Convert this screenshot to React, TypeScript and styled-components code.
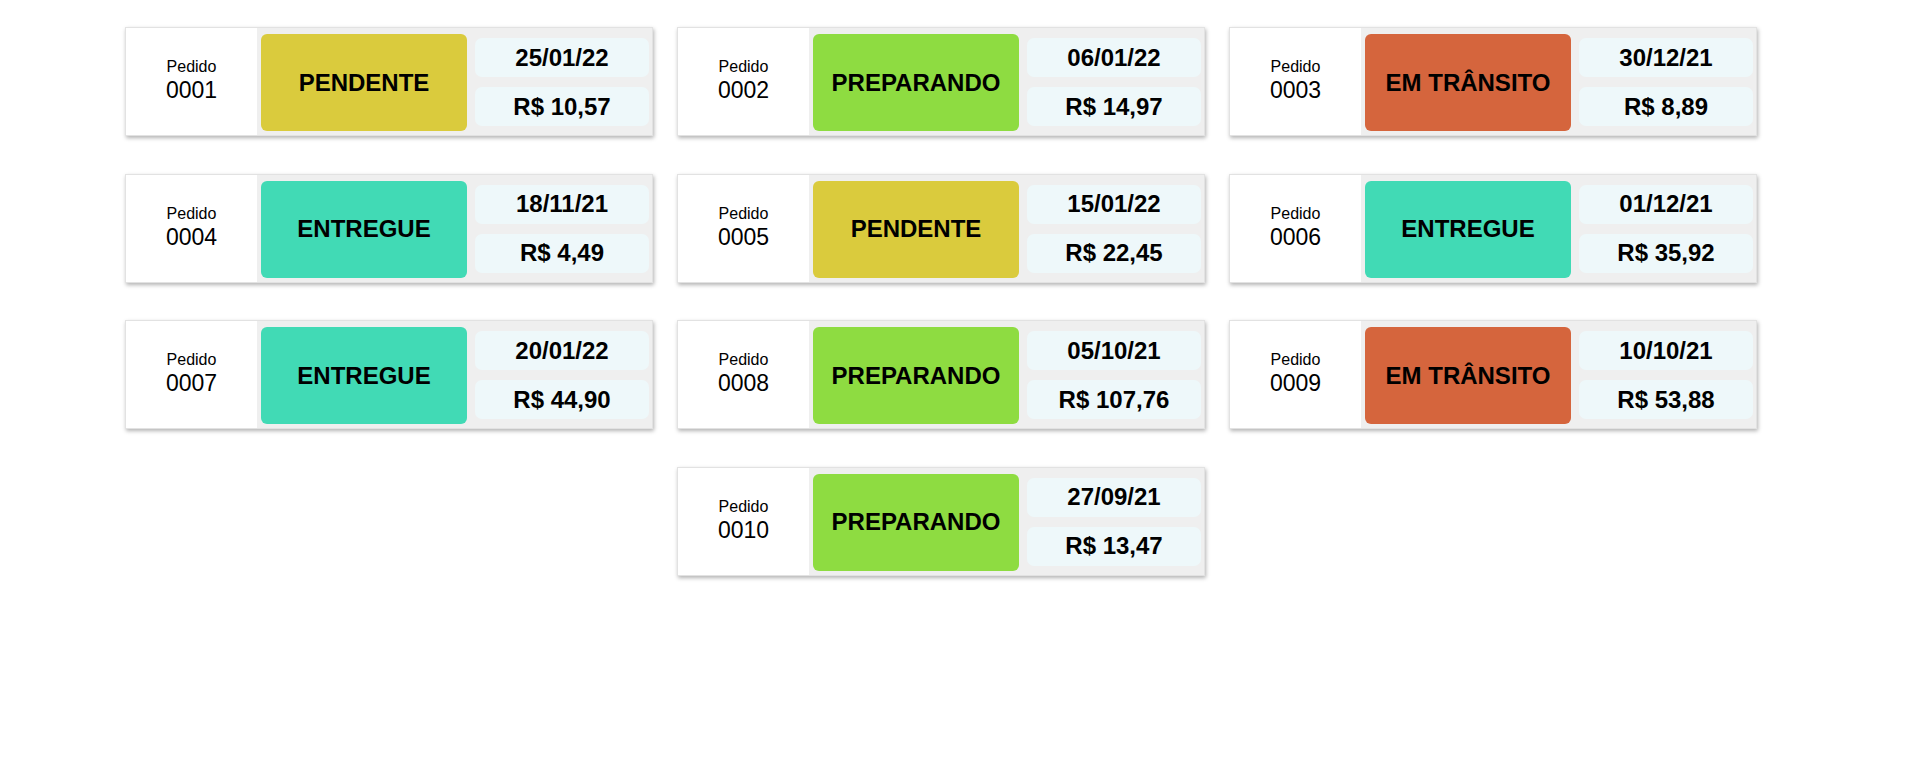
import styled, { createGlobalStyle } from "styled-components";

type Status = "PENDENTE" | "PREPARANDO" | "EM TRÂNSITO" | "ENTREGUE";

type Order = {
  id: string;
  status: Status;
  date: string;
  price: string;
};

const STATUS_COLORS: Record<Status, string> = {
  PENDENTE: "#dacb3d",
  PREPARANDO: "#8edc41",
  "EM TRÂNSITO": "#d5653d",
  ENTREGUE: "#41dab5",
};

const ORDERS: Order[] = [
  { id: "0001", status: "PENDENTE", date: "25/01/22", price: "R$ 10,57" },
  { id: "0002", status: "PREPARANDO", date: "06/01/22", price: "R$ 14,97" },
  { id: "0003", status: "EM TRÂNSITO", date: "30/12/21", price: "R$ 8,89" },
  { id: "0004", status: "ENTREGUE", date: "18/11/21", price: "R$ 4,49" },
  { id: "0005", status: "PENDENTE", date: "15/01/22", price: "R$ 22,45" },
  { id: "0006", status: "ENTREGUE", date: "01/12/21", price: "R$ 35,92" },
  { id: "0007", status: "ENTREGUE", date: "20/01/22", price: "R$ 44,90" },
  { id: "0008", status: "PREPARANDO", date: "05/10/21", price: "R$ 107,76" },
  { id: "0009", status: "EM TRÂNSITO", date: "10/10/21", price: "R$ 53,88" },
  { id: "0010", status: "PREPARANDO", date: "27/09/21", price: "R$ 13,47" },
];

const GlobalStyle = createGlobalStyle`
  body {
    margin: 0;
    background: #ffffff;
    font-family: "Liberation Sans", Arial, sans-serif;
    color: #000000;
  }
`;

const OrderCard = ({ order }: { order: Order }) => (
  <Card>
    <IdColumn>
      <IdLabel>Pedido</IdLabel>
      <IdNumber>{order.id}</IdNumber>
    </IdColumn>
    <StatusBox $color={STATUS_COLORS[order.status]}>{order.status}</StatusBox>
    <InfoColumn>
      <InfoBox>{order.date}</InfoBox>
      <InfoBox>{order.price}</InfoBox>
    </InfoColumn>
  </Card>
);

export default function App() {
  return (
    <>
      <GlobalStyle />
      <Page>
        <OrderList>
          {ORDERS.map((order) => (
            <OrderCard key={order.id} order={order} />
          ))}
        </OrderList>
      </Page>
    </>
  );
}

const Page = styled.main`
  padding: 27px 0 40px 125px;
`;

const OrderList = styled.div`
  width: 1632px;
  display: flex;
  flex-wrap: wrap;
  justify-content: center;
  column-gap: 24px;
  row-gap: 37.5px;
`;

const Card = styled.div`
  box-sizing: border-box;
  width: 528px;
  height: 109px;
  display: flex;
  background: #efefef;
  border: 1px solid #e2e2e2;
  box-shadow: 1px 2px 4px rgba(0, 0, 0, 0.3);
`;

const IdColumn = styled.div`
  width: 131px;
  flex-shrink: 0;
  background: #ffffff;
  display: flex;
  flex-direction: column;
  align-items: center;
  justify-content: center;
`;

const IdLabel = styled.span`
  font-size: 16px;
  line-height: 18px;
`;

const IdNumber = styled.span`
  font-size: 23px;
  line-height: 29px;
`;

const StatusBox = styled.div<{ $color: string }>`
  margin: 6px 0 4px 4px;
  width: 206px;
  flex-shrink: 0;
  border-radius: 6px;
  background: ${(p) => p.$color};
  display: flex;
  align-items: center;
  justify-content: center;
  font-weight: 700;
  font-size: 24px;
`;

const InfoColumn = styled.div`
  flex: 1;
  display: flex;
  flex-direction: column;
  gap: 10px;
  padding: 10px 3px 9px 8px;
`;

const InfoBox = styled.div`
  flex: 1;
  border-radius: 7px;
  background: #eef8fa;
  display: flex;
  align-items: center;
  justify-content: center;
  font-weight: 700;
  font-size: 24px;
`;
